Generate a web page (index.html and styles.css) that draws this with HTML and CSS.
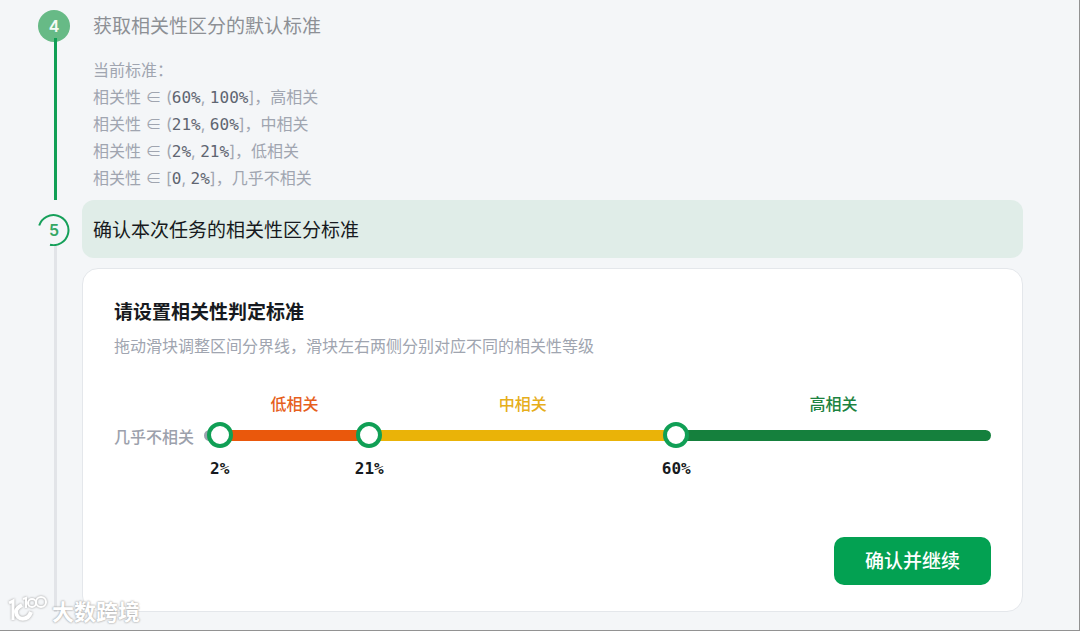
FILE: index.html
```html
<!DOCTYPE html>
<html lang="zh-CN">
<head>
    <meta charset="UTF-8">
    <meta name="viewport" content="width=device-width, initial-scale=1.0">
    <title>相关性区分标准</title>
    <link rel="stylesheet" href="styles.css">
</head>
<body>
    <main class="steps">
        <section class="step step-done">
            <div class="rail">
                <span class="marker">4</span>
                <span class="line"></span>
            </div>
            <div class="content">
                <h2 class="step-title">获取相关性区分的默认标准</h2>
                <div class="rules">
                    <p>当前标准：</p>
                    <p>相关性 ∈ (<b>60%</b>, <b>100%</b>]，高相关</p>
                    <p>相关性 ∈ (<b>21%</b>, <b>60%</b>]，中相关</p>
                    <p>相关性 ∈ (<b>2%</b>, <b>21%</b>]，低相关</p>
                    <p>相关性 ∈ [<b>0</b>, <b>2%</b>]，几乎不相关</p>
                </div>
            </div>
        </section>

        <section class="step step-active">
            <div class="rail">
                <span class="marker">
                    <svg class="ring" viewBox="0 0 32 32" aria-hidden="true">
                        <path d="M1.2 11.5A15 15 0 1 1 12 30.7" fill="none" stroke="currentColor" stroke-width="2"/>
                    </svg>
                    5
                </span>
                <span class="line"></span>
            </div>
            <div class="content">
                <h2 class="step-title">确认本次任务的相关性区分标准</h2>
                <form class="card">
                    <h3 class="card-title">请设置相关性判定标准</h3>
                    <p class="card-hint">拖动滑块调整区间分界线，滑块左右两侧分别对应不同的相关性等级</p>

                    <div class="slider">
                        <span class="none-label">几乎不相关</span>
                        <div class="scale">
                            <div class="row names">
                                <span style="width: 2%"></span>
                                <span class="low" style="width: 19%">低相关</span>
                                <span class="mid" style="width: 39%">中相关</span>
                                <span class="high" style="width: 40%">高相关</span>
                            </div>
                            <div class="track">
                                <div class="row bar">
                                    <span class="none" style="width: 2%"></span>
                                    <span class="low" style="width: 19%"></span>
                                    <span class="mid" style="width: 39%"></span>
                                    <span class="high" style="width: 40%"></span>
                                </div>
                                <input type="range" id="t1" min="0" max="100" value="2" aria-label="低相关下限">
                                <input type="range" id="t2" min="0" max="100" value="21" aria-label="中相关下限">
                                <input type="range" id="t3" min="0" max="100" value="60" aria-label="高相关下限">
                            </div>
                            <div class="values">
                                <output for="t1" style="left: 2%">2%</output>
                                <output for="t2" style="left: 21%">21%</output>
                                <output for="t3" style="left: 60%">60%</output>
                            </div>
                        </div>
                    </div>

                    <div class="actions">
                        <button type="button" class="confirm">确认并继续</button>
                    </div>
                </form>
            </div>
        </section>
    </main>

    <div class="watermark">
        <svg viewBox="0 0 40 30" aria-hidden="true">
            <g fill="none" stroke="#fff">
                <path d="M1 8L5 6V25" stroke-width="3"/>
                <path d="M14 10Q8 13 8 17C9 26 20 26 23 17" stroke-width="4"/>
                <path d="M15 4L18 3V13" stroke-width="2"/>
                <circle cx="24" cy="8" r="4" stroke-width="2"/>
                <circle cx="33" cy="7" r="5" stroke-width="2"/>
            </g>
        </svg>
        <span>大数跨境</span>
    </div>
    <script src="script.js"></script>
</body>
</html>
```
FILE: styles.css
```css
* {
  box-sizing: border-box;
}
body, h2, h3, p {
  margin: 0;
}
body {
  position: relative;
  min-height: 100vh;
  border-right: 1px solid #929292;
  border-bottom: 1px solid #929292;
  background: #f4f6f8;
  color: #171a20;
  font-family: "Noto Sans CJK SC", sans-serif;
  font-size: 16px;
}
.steps {
  padding: 10px 56px 16px 38px;
}

/* steps */
.step {
  display: flex;
  gap: 12px;
}
.rail {
  display: flex;
  flex-direction: column;
  flex: none;
  width: 32px;
}
.marker {
  position: relative;
  display: flex;
  align-items: center;
  justify-content: center;
  height: 32px;
  border-radius: 50%;
  font-family: Inter, sans-serif;
  font-weight: 600;
}
.line {
  flex: 1;
  width: 3px;
  margin-left: 16px;
}
.content {
  flex: 1;
  min-width: 0;
}
.step-title {
  padding: 0 11px;
  font-size: 19px;
  font-weight: 400;
  line-height: 30px;
}
.step-done .marker {
  background: #67ba86;
  color: #f4fbf6;
}
.step-done .line {
  z-index: 1;
  margin-top: -4px;
  background: #109f55;
}
.step-done .step-title {
  color: #8d9095;
}
.rules {
  padding: 17px 11px 8px;
  color: #a0a5b0;
  font-family: Inter, "Noto Sans CJK SC", sans-serif;
  line-height: 27px;
}
.rules b {
  color: #5f6571;
  font-family: "DejaVu Sans Mono", monospace;
  font-weight: 400;
  line-height: 1;
}
.step-active .rail {
  padding-top: 14px;
}
.step-active .marker {
  color: #35a765;
}
.ring {
  position: absolute;
  inset: 0;
  color: #16a05a;
}
.step-active .line {
  background: #e2e4e8;
}
.step-active .step-title {
  padding: 14px 11px;
  border-radius: 12px;
  background: #e0ede8;
}

/* card */
.card {
  margin-top: 10px;
  padding: 28px 31px 26px;
  border: 1px solid #e4e7eb;
  border-radius: 16px;
  background: #fff;
}
.card-title {
  font-size: 19px;
  font-weight: 700;
  line-height: 28px;
}
.card-hint {
  margin-top: 8px;
  color: #a0a5b0;
  line-height: 24px;
}

/* slider */
.slider {
  display: flex;
  align-items: center;
  gap: 10px;
  margin-top: 34px;
}
.none-label {
  color: #9ca1ac;
  font-weight: 500;
}
.scale {
  flex: 1;
}
.row {
  display: flex;
}
.names {
  font-weight: 500;
  line-height: 24px;
  text-align: center;
}
.names .low { color: #e6601d; }
.names .mid { color: #e6ae1b; }
.names .high { color: #1c8240; }
.track {
  position: relative;
  margin: 15px 0 16px;
}
.bar {
  height: 11px;
  border-radius: 6px;
  overflow: hidden;
}
.bar .none { background: #9ca3af; }
.bar .low { background: #ea580c; }
.bar .mid { background: #eab308; }
.bar .high { background: #15803d; }
.track input {
  position: absolute;
  top: -8px;
  left: -13px;
  width: calc(100% + 26px);
  height: 26px;
  margin: 0;
  appearance: none;
  background: none;
  pointer-events: none;
}
.track input::-webkit-slider-thumb {
  appearance: none;
  width: 26px;
  height: 26px;
  border: 4px solid #109f55;
  border-radius: 50%;
  background: #fff;
  cursor: pointer;
  pointer-events: auto;
}
.values {
  position: relative;
  height: 24px;
}
.values output {
  position: absolute;
  transform: translateX(-50%);
  font-family: "DejaVu Sans Mono", monospace;
  font-weight: 700;
  line-height: 24px;
}

.actions {
  display: flex;
  justify-content: flex-end;
  margin-top: 56px;
}
.confirm {
  height: 48px;
  padding: 0 31px 3px;
  border: 0;
  border-radius: 10px;
  background: #03a152;
  color: #fff;
  font-family: inherit;
  font-size: 19px;
  font-weight: 500;
  cursor: pointer;
}

.watermark {
  position: absolute;
  bottom: 5px;
  left: 8px;
  display: flex;
  align-items: center;
  gap: 4px;
  color: #fff;
  font-size: 22px;
  font-weight: 700;
  line-height: 26px;
  text-shadow: 0 0 2px #aaa, 0 0 2px #aaa;
}
.watermark svg {
  width: 40px;
  height: 30px;
  filter: drop-shadow(0 0 1px #999);
}
```
FILE: script.js
```js
const inputs = Array.from(document.querySelectorAll('.track input'));
const outputs = document.querySelectorAll('.values output');

function update() {
  const stops = [0, ...inputs.map(i => Number(i.value)), 100];
  outputs.forEach((out, i) => {
    out.textContent = stops[i + 1] + '%';
    out.style.left = stops[i + 1] + '%';
  });
  document.querySelectorAll('.row').forEach(row => {
    Array.from(row.children).forEach((el, i) => {
      el.style.width = (stops[i + 1] - stops[i]) + '%';
    });
  });
}

inputs.forEach((input, i) => {
  input.addEventListener('input', () => {
    // keep the handles in order
    const min = i > 0 ? Number(inputs[i - 1].value) : 0;
    const max = i < 2 ? Number(inputs[i + 1].value) : 100;
    input.value = Math.min(Math.max(input.value, min), max);
    update();
  });
});
```
